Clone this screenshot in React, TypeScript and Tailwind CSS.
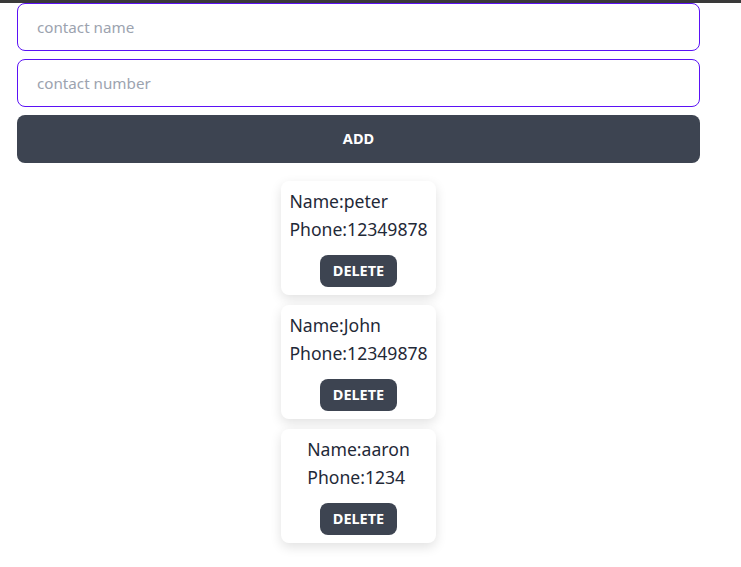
import { useState } from 'react';

type Contact = { name: string; phone: string };

const initial: Contact[] = [
  { name: 'peter', phone: '12349878' },
  { name: 'John', phone: '12349878' },
  { name: 'aaron', phone: '1234' },
];

export default function App() {
  const [contacts, setContacts] = useState<Contact[]>(initial);
  const [name, setName] = useState('');
  const [phone, setPhone] = useState('');

  const add = () => {
    if (!name || !phone) return;
    setContacts([...contacts, { name, phone }]);
    setName('');
    setPhone('');
  };

  return (
    <div className="min-h-screen bg-white font-['Noto_Sans','Open_Sans',sans-serif] text-[#1f2937]">
      <div className="h-[3px] bg-[#3a3a3a]" />
      <div className="ml-[17px] w-[683px] flex flex-col gap-2">
        <input
          value={name}
          onChange={(e) => setName(e.target.value)}
          placeholder="contact name"
          className="h-12 w-full rounded-lg border border-[#5b12f5] bg-white pl-[19px] pr-4 text-[15.2px] outline-none placeholder:text-[#9ca3af]"
        />
        <input
          value={phone}
          onChange={(e) => setPhone(e.target.value)}
          placeholder="contact number"
          className="h-12 w-full rounded-lg border border-[#5b12f5] bg-white pl-[19px] pr-4 text-[15.2px] outline-none placeholder:text-[#9ca3af]"
        />
        <button
          onClick={add}
          className="h-12 w-full rounded-lg bg-[#3d4451] text-[14.5px] font-bold uppercase text-white"
        >
          Add
        </button>

        <div className="mt-[10px] flex justify-center">
          <div className="grid gap-[10px]">
            {contacts.map((c, i) => (
              <div
                key={i}
                className="flex flex-col items-center rounded-lg bg-white px-2 pt-[6px] pb-2 shadow-[0_4px_12px_rgba(0,0,0,0.12)]"
              >
                <div className="text-[17.6px] leading-7">
                  <p>Name:{c.name}</p>
                  <p>Phone:{c.phone}</p>
                </div>
                <button
                  onClick={() => setContacts(contacts.filter((_, j) => j !== i))}
                  className="mt-[12px] h-8 rounded-lg bg-[#3d4451] px-[13px] text-[14.5px] font-bold uppercase text-white"
                >
                  Delete
                </button>
              </div>
            ))}
          </div>
        </div>
      </div>
    </div>
  );
}
